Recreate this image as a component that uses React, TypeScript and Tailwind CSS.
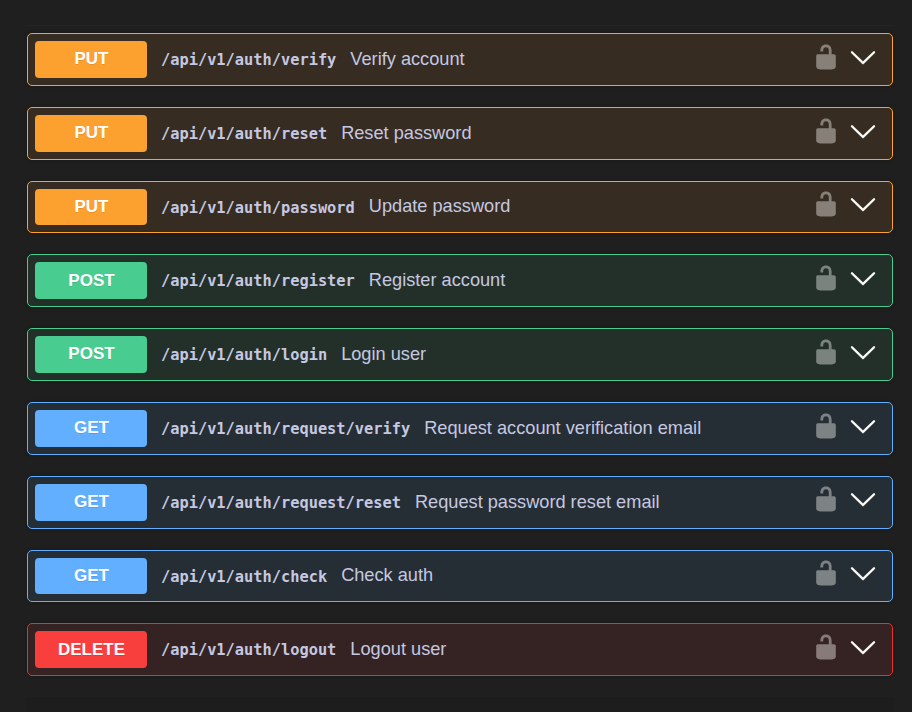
type Method = 'PUT' | 'POST' | 'GET' | 'DELETE';

const endpoints: { method: Method; path: string; summary: string }[] = [
  { method: 'PUT', path: '/api/v1/auth/verify', summary: 'Verify account' },
  { method: 'PUT', path: '/api/v1/auth/reset', summary: 'Reset password' },
  { method: 'PUT', path: '/api/v1/auth/password', summary: 'Update password' },
  { method: 'POST', path: '/api/v1/auth/register', summary: 'Register account' },
  { method: 'POST', path: '/api/v1/auth/login', summary: 'Login user' },
  { method: 'GET', path: '/api/v1/auth/request/verify', summary: 'Request account verification email' },
  { method: 'GET', path: '/api/v1/auth/request/reset', summary: 'Request password reset email' },
  { method: 'GET', path: '/api/v1/auth/check', summary: 'Check auth' },
  { method: 'DELETE', path: '/api/v1/auth/logout', summary: 'Logout user' },
];

const rowStyle: Record<Method, string> = {
  PUT: 'border-[#fca130] bg-[#362c22]',
  POST: 'border-[#49cc90] bg-[#23302a]',
  GET: 'border-[#61affe] bg-[#262e35]',
  DELETE: 'border-[#e8302f] bg-[#352323]',
};

const badgeStyle: Record<Method, string> = {
  PUT: 'bg-[#fca130]',
  POST: 'bg-[#49cc90]',
  GET: 'bg-[#61affe]',
  DELETE: 'bg-[#f93e3e]',
};

function UnlockIcon() {
  return (
    <svg className="h-7 w-7 shrink-0 opacity-40" viewBox="0 0 20 20" fill="#fffffb">
      <path d="M15.8 8H14V5.6C14 2.703 12.665 1 10 1 7.334 1 6 2.703 6 5.6V6h2v-.801C8 3.754 8.797 3 10 3c1.203 0 2 .754 2 2.199V8H4c-.553 0-1 .646-1 1.199V17c0 .549.428 1.139.951 1.307l1.197.387C5.672 18.861 6.55 19 7.1 19h5.8c.549 0 1.428-.139 1.951-.307l1.196-.387c.524-.167.953-.757.953-1.306V9.199C17 8.646 16.352 8 15.8 8z" />
    </svg>
  );
}

function ChevronIcon() {
  return (
    <svg className="h-7 w-7 shrink-0" viewBox="0 0 20 20" fill="#fffffb" stroke="#fffffb" strokeWidth="0.2">
      <path d="M17.418 6.109c.272-.268.709-.268.979 0s.271.701 0 .969l-7.908 7.83c-.27.268-.707.268-.979 0l-7.908-7.83c-.27-.268-.27-.701 0-.969.271-.268.709-.268.979 0L10 13.25l7.418-7.141z" />
    </svg>
  );
}

export default function App() {
  return (
    <main className="h-[712px] overflow-hidden bg-[#1f1f1f] px-[27px] pt-[25px] pr-[19px] font-['Liberation_Sans',Arial,sans-serif] text-[#c5c8e0]">
      <div className="mb-[7px] h-px bg-[#242424]" />
      <div className="flex flex-col gap-[21px]">
        {endpoints.map(({ method, path, summary }) => (
          <div
            key={path}
            className={`flex h-[52.8px] items-center rounded-[5px] border p-[7px] shadow-[0_0_4px_rgba(0,0,0,0.19)] ${rowStyle[method]}`}
          >
            <span
              className={`flex h-full w-[112px] items-center justify-center rounded-[4px] pb-[1px] pl-px text-[17px] font-bold text-white [text-shadow:0_1px_0_rgba(0,0,0,0.1)] ${badgeStyle[method]}`}
            >
              {method}
            </span>
            <span className="ml-[14px] pt-[1.1px] font-['DejaVu_Sans_Mono',monospace] text-[15.34px] leading-6 font-bold">{path}</span>
            <span className="ml-[14px] grow pb-[1.1px] text-[18.2px] leading-6">{summary}</span>
            <span className="mr-2 flex items-center gap-[9px] pb-[5.4px]">
              <UnlockIcon />
              <ChevronIcon />
            </span>
          </div>
        ))}
      </div>
      <div className="mt-[21px] h-4 bg-[#1d1d1d]" />
    </main>
  );
}
